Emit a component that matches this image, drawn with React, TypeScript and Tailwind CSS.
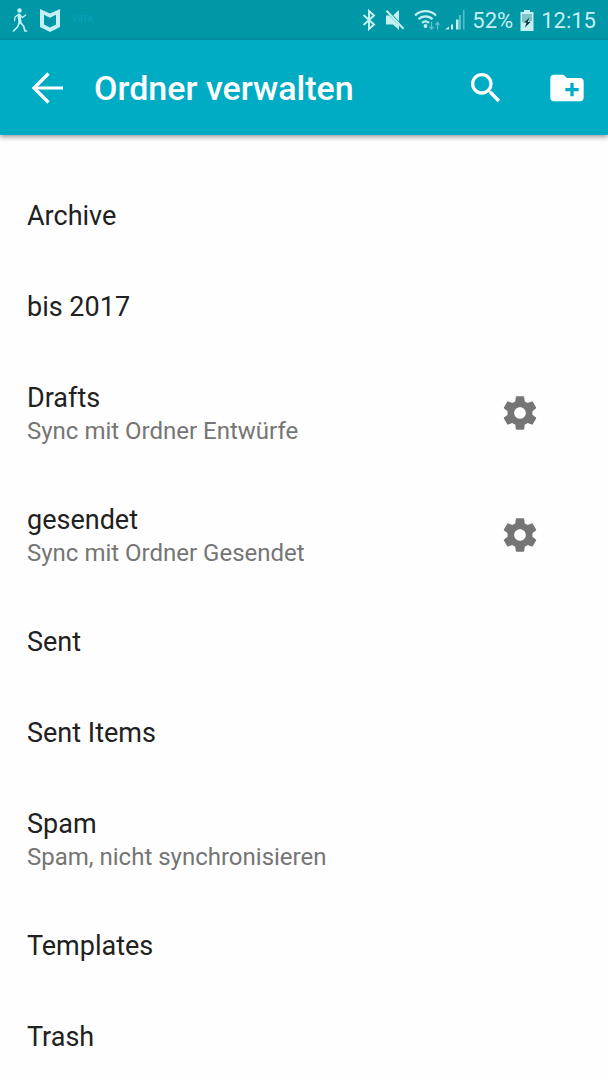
import type { ReactNode } from "react";

type Folder = {
  name: string;
  info?: string;
  configurable?: boolean;
};

const FOLDERS: Folder[] = [
  { name: "Archive" },
  { name: "bis 2017" },
  { name: "Drafts", info: "Sync mit Ordner Entwürfe", configurable: true },
  { name: "gesendet", info: "Sync mit Ordner Gesendet", configurable: true },
  { name: "Sent" },
  { name: "Sent Items" },
  { name: "Spam", info: "Spam, nicht synchronisieren" },
  { name: "Templates" },
  { name: "Trash" },
];

function WalkIcon() {
  return (
    <svg width="16" height="26" viewBox="0 0 16 26" fill="none" stroke="currentColor" strokeLinecap="round" strokeLinejoin="round">
      <circle cx="7.5" cy="3.5" r="2.2" fill="currentColor" stroke="none" />
      <path d="M7 8l1 7.500" strokeWidth="3.2" />
      <path d="M6.500 7.500L3 10l-.4 3.500M8 8l2.500 2.500 3.200-2.500" strokeWidth="1.300" />
      <path d="M7.500 15.500l-2 4.500-4 4M8.500 15.500l3 3.500 1.500 5h1.500" strokeWidth="1.700" />
    </svg>
  );
}

function ShieldIcon() {
  return (
    <svg width="20" height="23" viewBox="0 0 20 23" fill="currentColor" fillRule="evenodd">
      <path d="M0 0l10 4.500L20 0v18l-10 5-10-5zM4 5.800v9.700l6 3 6-3V5.800l-6 3z" />
    </svg>
  );
}

function BluetoothIcon() {
  return (
    <svg width="14" height="22" viewBox="0 0 14 22" fill="none" stroke="currentColor" strokeWidth="2">
      <path d="M1.500 6l10.500 9.500L7 20V2l5 4.500L1.500 16" />
    </svg>
  );
}

function MutedIcon() {
  return (
    <svg width="20" height="22" viewBox="0 0 20 22" fill="currentColor">
      <path d="M1 6.500h3.200l9.800 10V21l-6-5.500H1zM8.200 6.200L14 1v11.200z" />
      <path d="M1.500 1.800l17 18" stroke="currentColor" strokeWidth="2" />
    </svg>
  );
}

function WifiIcon() {
  return (
    <svg width="27" height="22" viewBox="0 0 27 22" fill="none" stroke="currentColor">
      <g strokeWidth="2.200">
        <path d="M1 6.500a15 15 0 0 1 21 0" />
        <path d="M4.500 10.200a10 10 0 0 1 14 0" />
        <path d="M8 13.800a5.500 5.500 0 0 1 7 0" />
      </g>
      <circle cx="11.500" cy="17" r="1.900" fill="currentColor" stroke="none" />
      <g strokeWidth="1.300" opacity=".5">
        <path d="M17.500 13v7M15.500 17.800l2 2.200 2-2.200M23.500 20.500v-7M21.500 15.700l2-2.200 2 2.200" />
      </g>
    </svg>
  );
}

function SignalIcon() {
  return (
    <svg width="20" height="22" viewBox="0 0 20 22" fill="currentColor">
      <path d="M0 20.500l4-3v3zM6 15.500h2v5H6zM11 10.500h2.500v10H11z" />
      <path d="M14 6h2v14.500h-2zM18 1h1.500v19.500H18z" opacity=".45" />
    </svg>
  );
}

function BatteryIcon() {
  return (
    <svg width="14" height="21" viewBox="0 0 14 21">
      <path d="M4 0h6v2h3.500v19H.5V2H4z" fill="#c4f0f3" />
      <path d="M2 4h10v7l-3 1-1-3-4 4-2-1z" fill="#7fc5c9" />
      <path d="M9.500 7.500L4 12.500h2.500L5 17.500l5.500-5.500H7.800z" fill="#123c42" />
    </svg>
  );
}

function BackIcon() {
  return (
    <svg width="40" height="40" viewBox="0 0 40 40" fill="none" stroke="currentColor" strokeWidth="3.200">
      <path d="M36 20H6.500M21.500 5.500L7 20l14.500 14.500" />
    </svg>
  );
}

function SearchIcon() {
  return (
    <svg width="40" height="40" viewBox="0 0 24 24" fill="currentColor">
      <path d="M15.500 14h-.79l-.28-.27A6.470 6.470 0 0 0 16 9.500 6.500 6.500 0 1 0 9.500 16c1.610 0 3.090-.59 4.230-1.570l.27.28v.79l5 4.990L20.490 19l-4.990-5zm-6 0C7.010 14 5 11.990 5 9.500S7.010 5 9.500 5 14 7.010 14 9.500 11.990 14 9.500 14z" />
    </svg>
  );
}

function NewFolderIcon() {
  return (
    <svg width="40" height="40" viewBox="0 0 24 24" fill="currentColor">
      <path d="M20 6h-8l-2-2H4c-1.110 0-1.990.89-1.990 2L2 18c0 1.110.89 2 2 2h16c1.110 0 2-.89 2-2V8c0-1.110-.89-2-2-2zm-1 8h-3v3h-2v-3h-3v-2h3V9h2v3h3v2z" />
    </svg>
  );
}

function GearIcon() {
  return (
    <svg width="40" height="40" viewBox="0 0 24 24" fill="currentColor">
      <path d="M19.430 12.980c.04-.32.07-.64.07-.98s-.03-.66-.07-.98l2.110-1.650c.19-.15.24-.42.12-.64l-2-3.460c-.12-.22-.39-.3-.61-.22l-2.490 1c-.52-.4-1.080-.73-1.690-.98l-.38-2.650C14.460 2.180 14.250 2 14 2h-4c-.25 0-.46.18-.49.42l-.38 2.650c-.61.25-1.170.59-1.690.98l-2.490-1c-.23-.09-.49 0-.61.22l-2 3.460c-.13.22-.07.49.12.64l2.110 1.650c-.04.32-.07.65-.07.98s.03.66.07.98l-2.110 1.650c-.19.15-.24.42-.12.64l2 3.460c.12.22.39.3.61.22l2.490-1c.52.4 1.080.73 1.690.98l.38 2.650c.03.24.24.42.49.42h4c.25 0 .46-.18.49-.42l.38-2.650c.61-.25 1.170-.59 1.690-.98l2.490 1c.23.09.49 0 .61-.22l2-3.460c.12-.22.07-.49-.12-.64l-2.110-1.650zM12 15.500c-1.930 0-3.500-1.570-3.500-3.500s1.570-3.500 3.500-3.500 3.500 1.570 3.500 3.500-1.570 3.500-3.500 3.500z" />
    </svg>
  );
}

function IconButton({ label, children }: { label: string; children: ReactNode }) {
  return (
    <button type="button" aria-label={label} className="shrink-0 cursor-pointer">
      {children}
    </button>
  );
}

function StatusBar() {
  return (
    <div className="flex h-10 shrink-0 items-center justify-between bg-[#0097a7] px-3 text-[22px] text-[#c4f0f3]">
      <div className="flex items-center gap-3">
        <WalkIcon />
        <ShieldIcon />
        <span className="text-[9px] text-[#06a3c0]">VIITA</span>
      </div>
      <div className="flex items-center gap-[7px]">
        <div className="flex items-center gap-[9px]">
          <BluetoothIcon />
          <MutedIcon />
          <div className="flex items-center gap-1">
            <WifiIcon />
            <SignalIcon />
          </div>
        </div>
        <span>52%</span>
        <BatteryIcon />
        <span>12:15</span>
      </div>
    </div>
  );
}

function FolderRow({ folder }: { folder: Folder }) {
  return (
    <li className="flex items-center justify-between pr-[68px] pl-[27px]">
      <div className="pt-[30px] pb-[29px]">
        <p className="text-[27px] leading-8 text-[#212121]">{folder.name}</p>
        {folder.info && (
          <p className="mt-1 text-[24px] leading-[27px] text-[#757575]">{folder.info}</p>
        )}
      </div>
      {folder.configurable && (
        <div className="flex text-[#757575]">
          <IconButton label={`${folder.name} Einstellungen`}>
            <GearIcon />
          </IconButton>
        </div>
      )}
    </li>
  );
}

export default function App() {
  return (
    <div className="flex h-screen flex-col overflow-hidden bg-[#fefefe] font-[Roboto,sans-serif]">
      <StatusBar />
      <header className="z-10 flex h-[95px] shrink-0 items-center bg-[#00acc4] pr-[21px] pl-[27px] text-white shadow-[0_2px_5px_rgba(0,0,0,0.4)]">
        <IconButton label="Zurück">
          <BackIcon />
        </IconButton>
        <h1 className="ml-[27px] flex-1 text-[34px] leading-10 font-medium">Ordner verwalten</h1>
        <div className="flex gap-[41px]">
          <IconButton label="Suchen">
            <SearchIcon />
          </IconButton>
          <IconButton label="Neuer Ordner">
            <NewFolderIcon />
          </IconButton>
        </div>
      </header>
      <main className="flex-1 overflow-y-auto pt-[35px] [scrollbar-width:none]">
        <ul>
          {FOLDERS.map((folder) => (
            <FolderRow key={folder.name} folder={folder} />
          ))}
        </ul>
      </main>
    </div>
  );
}
